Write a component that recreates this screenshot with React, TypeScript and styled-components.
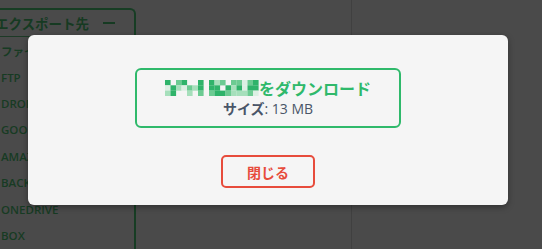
import React from "react";
import styled, { createGlobalStyle } from "styled-components";

const Global = createGlobalStyle`
  html, body { margin: 0; padding: 0; background: #4a4a4a; }
  body { font-family: "Open Sans", "Noto Sans CJK JP", sans-serif; }
`;

const Page = styled.div`
  position: relative;
  display: flex;
  width: 542px;
  height: 249px;
  overflow: hidden;
  background: #4a4a4a;
`;

const ExportPanel = styled.div`
  flex: none;
  box-sizing: border-box;
  width: 156px;
  margin-left: -20px;
  margin-top: 8px;
  border: 2px solid #173d24;
  border-bottom: none;
  border-radius: 6px 6px 0 0;
  display: flex;
  flex-direction: column;
`;

const PanelHeader = styled.div`
  height: 28px;
  display: flex;
  align-items: center;
  justify-content: space-between;
  padding: 0 19px 0 13px;
  border-bottom: 1px solid #1d3a26;
  font-family: "Noto Sans CJK JP", sans-serif;
  font-weight: 700;
  font-size: 13.5px;
  color: #163a22;
`;

const HeaderTitle = styled.span`
  white-space: nowrap;
`;

const Minus = styled.span`
  flex: none;
  width: 12px;
  height: 2px;
  background: #163a22;
`;

const PanelItem = styled.div`
  height: 28px;
  display: flex;
  align-items: center;
  padding-left: 19px;
  font-family: "Open Sans", "Noto Sans CJK JP", sans-serif;
  font-weight: 600;
  font-size: 11.5px;
  color: #173b23;
  white-space: nowrap;
`;

const MiddleArea = styled.div`
  flex: none;
  width: 215px;
`;

const SideArea = styled.div`
  flex: 1;
  border-left: 1px solid #404040;
`;

const Modal = styled.div`
  position: absolute;
  left: 28px;
  top: 35px;
  width: 480px;
  height: 170px;
  box-sizing: border-box;
  background: #f5f5f5;
  border-radius: 6px;
  box-shadow: 0 2px 6px rgba(0, 0, 0, 0.35);
  display: flex;
  flex-direction: column;
  align-items: center;
  padding-top: 33px;
`;

const DownloadBox = styled.div`
  width: 266px;
  height: 60px;
  box-sizing: border-box;
  border: 2px solid #2fb96b;
  border-radius: 6px;
  display: flex;
  flex-direction: column;
  align-items: center;
  justify-content: center;
  gap: 1px;
`;

const NameLine = styled.div`
  display: flex;
  align-items: center;
  font-family: "Noto Sans CJK JP", sans-serif;
  font-weight: 700;
  font-size: 16px;
  line-height: 20px;
  color: #2fb96b;
`;

const SizeLine = styled.div`
  font-family: "Open Sans", "Noto Sans CJK JP", sans-serif;
  font-weight: 500;
  font-size: 14px;
  line-height: 19px;
  color: #4a5568;
`;

const SizeLabel = styled.span`
  font-family: "Noto Sans CJK JP", sans-serif;
  font-weight: 700;
`;

const CloseButton = styled.button`
  margin-top: 27px;
  width: 94px;
  height: 33px;
  box-sizing: border-box;
  border: 2px solid #e74c3c;
  border-radius: 5px;
  background: transparent;
  color: #e74c3c;
  font-family: "Noto Sans CJK JP", sans-serif;
  font-weight: 700;
  font-size: 14px;
  padding: 0;
  cursor: pointer;
`;

const palette: Record<string, string> = {
  D: "#2fb36a",
  M: "#6ccb92",
  L: "#a6dfbb",
  P: "#dcefe3",
};

const mosaic = [
  "D.MD..D.DLM.MMPMD",
  "PDLPMLD.DD.DLDPDD",
  "LD..L.M.MDDMLLLMP",
];

const Mosaic: React.FC = () => (
  <svg width="94" height="16" viewBox="0 0 94 16">
    {mosaic.map((row, r) =>
      row.split("").map((c, i) =>
        c === "." ? null : (
          <rect
            key={`${r}-${i}`}
            x={i * 5.5}
            y={r * 5.3}
            width={5.6}
            height={5.4}
            fill={palette[c]}
          />
        )
      )
    )}
  </svg>
);

const items = [
  "ファイル",
  "FTP",
  "DROPBOX",
  "GOOGLE DRIVE",
  "AMAZON S3",
  "BACKBLAZE",
  "ONEDRIVE",
  "BOX",
];

export default function App() {
  return (
    <>
      <Global />
      <Page>
        <ExportPanel>
          <PanelHeader>
            <HeaderTitle>エクスポート先</HeaderTitle>
            <Minus />
          </PanelHeader>
          {items.map((t) => (
            <PanelItem key={t}>{t}</PanelItem>
          ))}
        </ExportPanel>
        <MiddleArea />
        <SideArea />
        <Modal>
          <DownloadBox>
            <NameLine>
              <Mosaic />
              <span>をダウンロード</span>
            </NameLine>
            <SizeLine>
              <SizeLabel>サイズ</SizeLabel>: 13 MB
            </SizeLine>
          </DownloadBox>
          <CloseButton>閉じる</CloseButton>
        </Modal>
      </Page>
    </>
  );
}
